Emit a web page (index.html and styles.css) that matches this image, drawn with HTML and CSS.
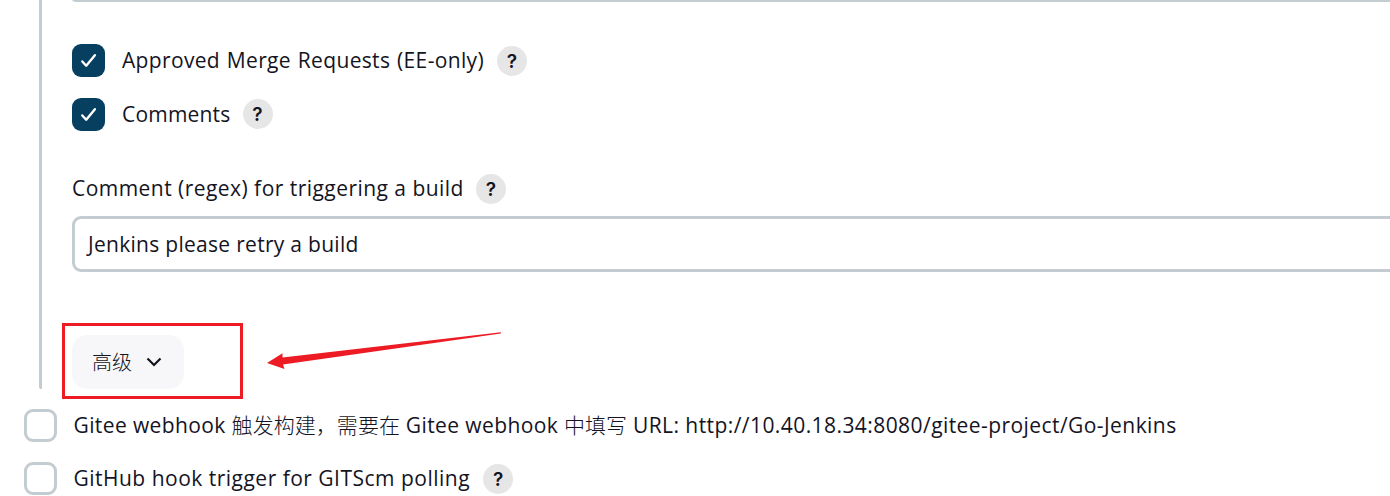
FILE: index.html
```html
<!DOCTYPE html>
<html lang="zh-CN">
<head>
<meta charset="utf-8">
<title>Jenkins</title>
<link rel="stylesheet" href="styles.css">
</head>
<body>
<main class="config">
  <section class="nested">
    <div class="field-end"></div>
    <div class="option">
      <span class="checkbox checked"><svg viewBox="0 0 33 33"><path d="M10.3 17.5l3.9 4.2 8.7-10.5"/></svg></span>
      <span class="label t-approved">Approved Merge Requests (EE-only)</span>
      <span class="help">?</span>
    </div>
    <div class="option second">
      <span class="checkbox checked"><svg viewBox="0 0 33 33"><path d="M10.3 17.5l3.9 4.2 8.7-10.5"/></svg></span>
      <span class="label t-comments">Comments</span>
      <span class="help">?</span>
    </div>
    <div class="caption">
      <span class="label t-regex">Comment (regex) for triggering a build</span>
      <span class="help">?</span>
    </div>
    <div class="input"><span class="label">Jenkins please retry a build</span></div>
    <div class="advanced">
      <span>高级</span>
      <svg class="chevron" viewBox="0 0 16 10"><path d="M1.500 1.500L8 8l6.500-6.500"/></svg>
      <div class="highlight"></div>
    </div>
  </section>
  <div class="option trigger">
    <span class="checkbox"></span>
    <span class="label t-gitee">Gitee webhook <span class="cjk">触发构建，需要在</span> Gitee webhook <span class="cjk">中填写</span> <span class="t-url">URL: http://10.40.18.34:8080/gitee-project/Go-Jenkins</span></span>
  </div>
  <div class="option trigger last">
    <span class="checkbox"></span>
    <span class="label t-github">GitHub hook trigger for GITScm polling</span>
    <span class="help">?</span>
  </div>
  <svg class="arrow" viewBox="0 0 236 36"><path d="M0 33L15.500 23.200V27.500L234 2.300 233.800 3.500 16 34.500 17.500 39z"/></svg>
</main>
</body>
</html>
```
FILE: styles.css
```css
* { box-sizing: border-box; }
body {
  margin: 0;
  background: #fff;
  color: #14141f;
  font: 21px/30px "Open Sans", "Noto Sans CJK SC", sans-serif;
}
.config {
  position: relative;
  height: 496px;
  overflow: hidden;
}
.nested {
  height: 389px;
  margin-left: 39px;
  padding-left: 30px;
  border-left: 3px solid #c3ccd1;
  border-radius: 0 0 2px 2px;
}
.field-end {
  height: 2px;
  border-bottom: 2px solid #c3ccd1;
  border-bottom-left-radius: 6px 2px;
}
.option {
  display: flex;
  align-items: center;
  height: 33px;
  margin-top: 42px;
}
.option.second { margin-top: 21px; }
.checkbox {
  flex: none;
  width: 33px;
  height: 33px;
  margin-right: 17px;
  border: 3px solid #c3ccd1;
  border-radius: 9px;
}
.checked { border: 0; background: #073f61; }
.checked svg { display: block; width: 33px; height: 33px; }
.checked path {
  fill: none;
  stroke: #fff;
  stroke-width: 2.4;
  stroke-linecap: round;
  stroke-linejoin: round;
}
.label { white-space: nowrap; letter-spacing: 0.29px; }
.option .label, .caption .label { flex: none; }
.option .label { margin-bottom: 2px; }
.t-approved { letter-spacing: 0.34px; word-spacing: 1px; }
.t-comments { letter-spacing: 0.2px; }
.t-regex { letter-spacing: 0.46px; }
.t-gitee { letter-spacing: 0.39px; }
.t-github { letter-spacing: 0.49px; }
.t-url { letter-spacing: 0.43px; }
.help {
  flex: none;
  width: 30px;
  height: 30px;
  margin: 1px 0 0 13px;
  border-radius: 50%;
  background: #e6e6e6;
  font: 600 19px/31px Inter, sans-serif;
  text-align: center;
}
.second .help { margin: -1px 0 0 12px; }
.caption {
  display: flex;
  height: 30px;
  margin-top: 42px;
}
.caption .help { margin-left: 12px; }
.input {
  width: 1400px;
  height: 56px;
  margin-top: 13px;
  padding: 10px 13px;
  border: 3px solid #c3ccd1;
  border-radius: 9px;
}
.advanced {
  position: relative;
  display: flex;
  align-items: center;
  width: 112px;
  height: 54px;
  margin-top: 63px;
  padding-left: 20px;
  border-radius: 15px;
  background: #f7f7f9;
  font: 300 20px/30px "Noto Sans CJK SC", sans-serif;
}
.chevron { width: 16px; height: 10px; margin-left: 13.5px; }
.chevron path { fill: none; stroke: #14141f; stroke-width: 2.2; }
.highlight {
  position: absolute;
  top: -12px;
  left: -10px;
  width: 181px;
  height: 76px;
  border: 3px solid #ed1c24;
}
.trigger { margin: 20px 0 0 24px; }
.trigger.last { margin-top: 20px; }
.trigger .checkbox { margin-right: 16.5px; }
.cjk {
  font-family: "Noto Sans CJK SC", sans-serif;
  font-weight: 300;
  letter-spacing: 0.05px;
}
.arrow {
  position: absolute;
  top: 330px;
  left: 267px;
  width: 236px;
  height: 36px;
  overflow: visible;
}
.arrow path { fill: #ed1c24; }
```
